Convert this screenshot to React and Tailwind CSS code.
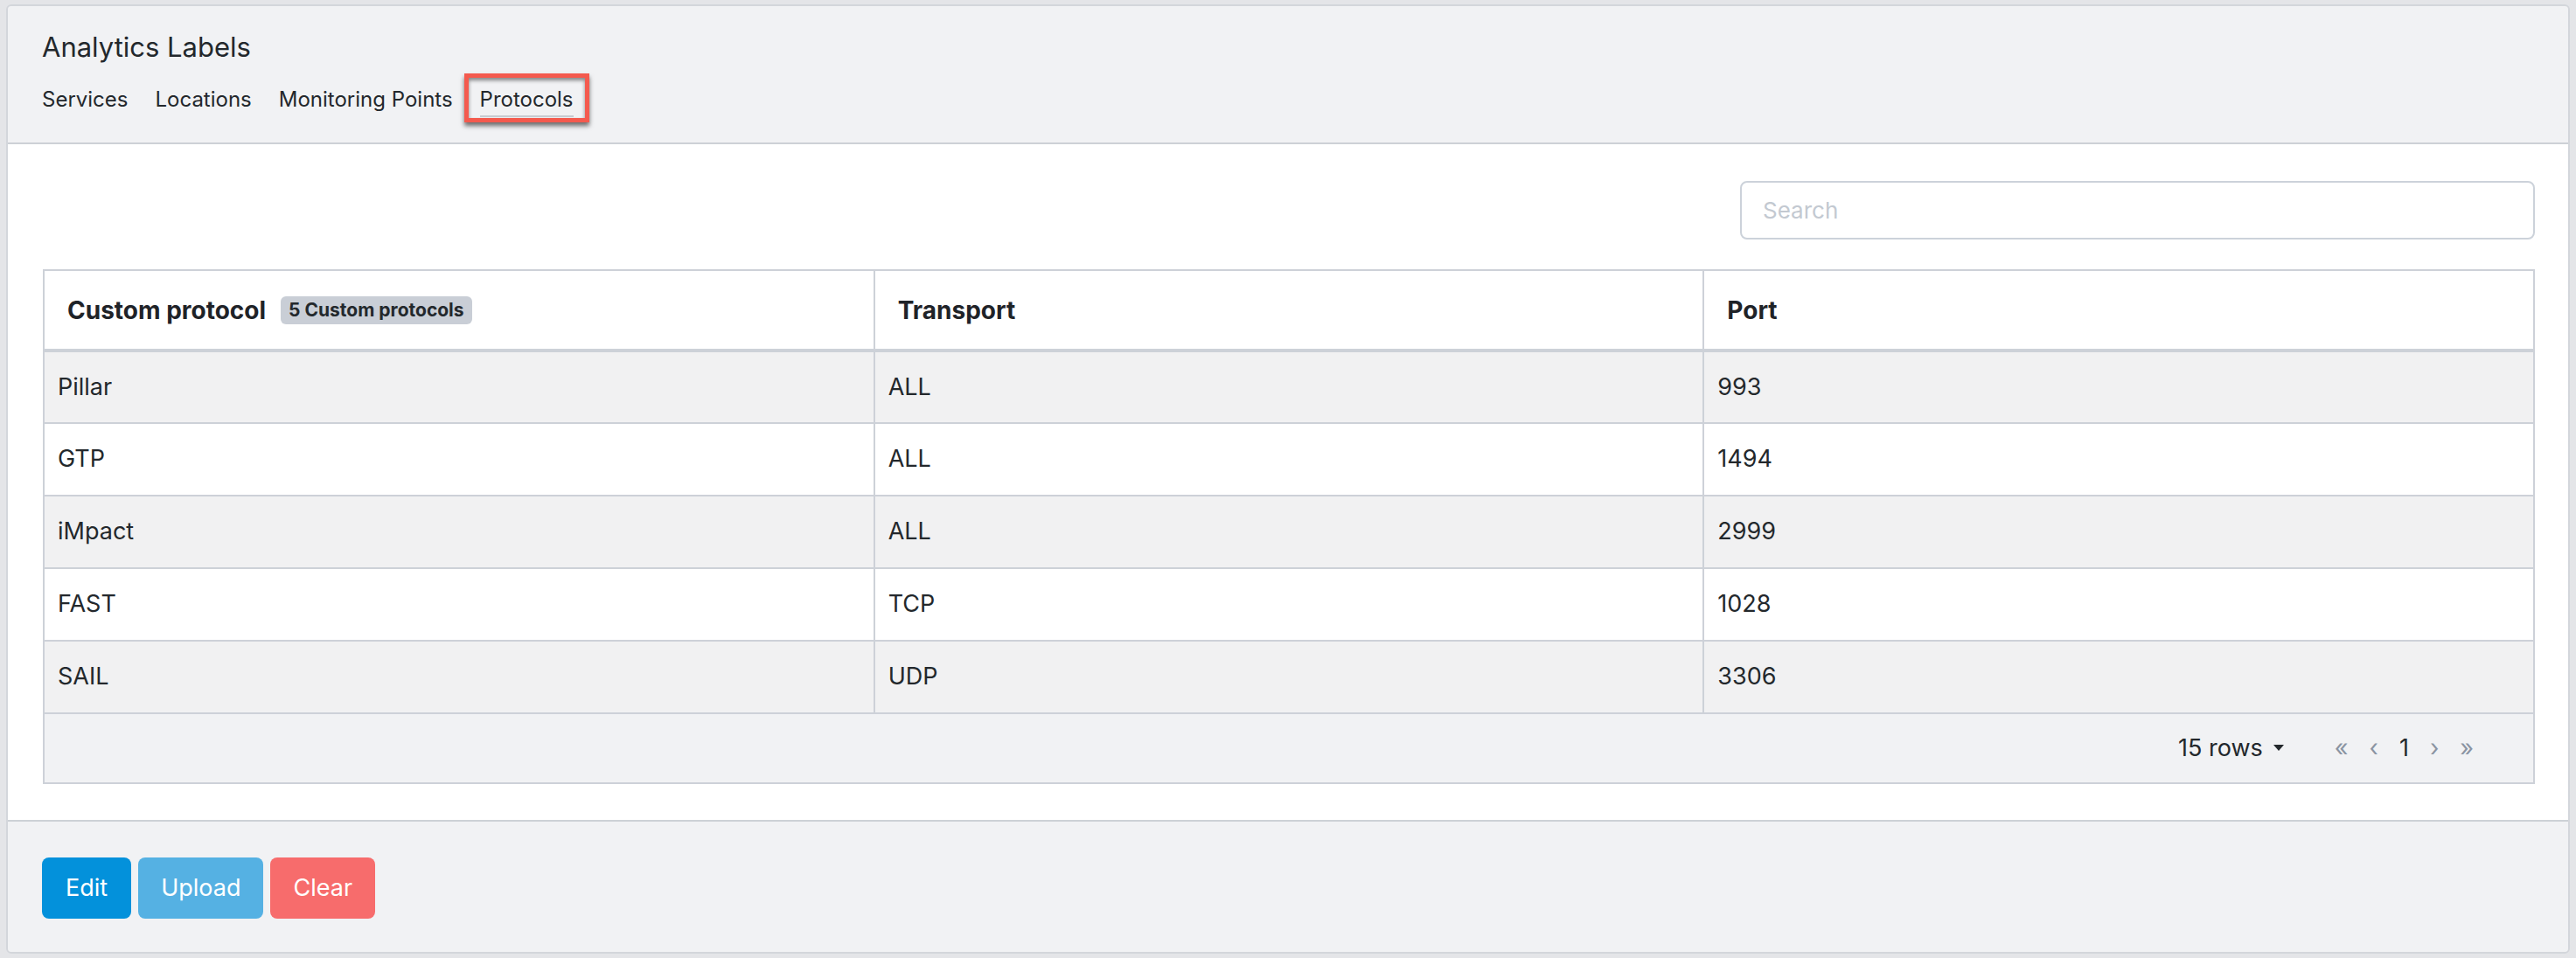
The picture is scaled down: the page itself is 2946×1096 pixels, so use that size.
const rows = [
  { name: "Pillar", transport: "ALL", port: "993" },
  { name: "GTP", transport: "ALL", port: "1494" },
  { name: "iMpact", transport: "ALL", port: "2999" },
  { name: "FAST", transport: "TCP", port: "1028" },
  { name: "SAIL", transport: "UDP", port: "3306" },
];

const tabs = ["Services", "Locations", "Monitoring Points", "Protocols"];

function Tab({ label, active }) {
  return (
    <div className="relative">
      <div
        className={
          "text-[24px] leading-[30px] text-[#23282c] pb-[3px] border-b-2 " +
          (active ? "border-[#c8ccd2]" : "border-transparent")
        }
      >
        {label}
      </div>
      {active && (
        <div className="absolute -left-[18px] -top-[15px] -right-[18px] h-[56px] border-[5px] border-[#f45a4e] shadow-[0_4px_5px_rgba(0,0,0,0.55),inset_0_3px_4px_rgba(0,0,0,0.45)]" />
      )}
    </div>
  );
}

export default function App() {
  return (
    <div
      className="min-h-screen bg-[#e4e5e8] pt-[5px] px-[7px] pb-[6px]"
      style={{ fontFamily: "Inter, 'Noto Sans', sans-serif" }}
    >
      <div className="border-2 border-[#d3d6db] rounded-[6px] overflow-hidden">
        {/* header */}
        <div className="bg-[#f1f2f4] border-b-2 border-[#cdd1d6] pl-[39px] pt-[29px] pb-[29px]">
          <h1 className="text-[31px] leading-[36px] text-[#23282c]">Analytics Labels</h1>
          <div className="flex gap-[31px] mt-[27px]">
            {tabs.map((t) => (
              <Tab key={t} label={t} active={t === "Protocols"} />
            ))}
          </div>
        </div>

        {/* body */}
        <div className="bg-white pl-[40px] pr-[38px] pt-[42px] pb-[41px]">
          <div className="flex justify-end">
            <input
              className="w-[909px] h-[67px] rounded-[8px] border-2 border-[#ccd2da] pl-[24px] text-[26px] text-[#23282c] placeholder:text-[#c3c9d1] outline-none"
              placeholder="Search"
            />
          </div>

          <div className="mt-[34px] border-2 border-[#cdd1d8]">
            <table className="w-full table-fixed border-collapse">
              <thead>
                <tr className="h-[91px] border-b-4 border-[#cdd1d8] bg-white">
                  <th className="text-left pl-[26px] text-[28px] font-bold text-[#1f2328]">
                    <div className="flex items-center gap-[17px]">
                      <span>Custom protocol</span>
                      <span className="bg-[#c9ced6] rounded-[6px] px-[9px] h-[32px] flex items-center text-[21px] font-bold text-[#23282c]">
                        5 Custom protocols
                      </span>
                    </div>
                  </th>
                  <th className="text-left pl-[26px] text-[28px] font-bold text-[#1f2328] border-l-2 border-[#cdd1d8]">
                    Transport
                  </th>
                  <th className="text-left pl-[26px] text-[28px] font-bold text-[#1f2328] border-l-2 border-[#cdd1d8]">
                    Port
                  </th>
                </tr>
              </thead>
              <tbody>
                {rows.map((r, i) => (
                  <tr
                    key={r.name}
                    className={
                      "h-[83px] border-b-2 border-[#cdd1d8] text-[27px] text-[#23282c] " +
                      (i % 2 === 0 ? "bg-[#f1f1f2]" : "bg-white")
                    }
                  >
                    <td className="pl-[15px]">{r.name}</td>
                    <td className="pl-[15px] border-l-2 border-[#cdd1d8]">{r.transport}</td>
                    <td className="pl-[15px] border-l-2 border-[#cdd1d8]">{r.port}</td>
                  </tr>
                ))}
              </tbody>
            </table>
            <div className="h-[78px] bg-[#f1f2f4] flex items-center justify-end pr-[68px] text-[27px] text-[#23282c]">
              <div className="flex items-center gap-[12px]">
                <span>15 rows</span>
                <svg width="12" height="8" viewBox="0 0 12 8">
                  <path d="M0 0 L12 0 L6 7 Z" fill="#23282c" />
                </svg>
              </div>
              <div className="flex items-center gap-[24px] ml-[58px]">
                <span className="text-[#8a94a2]">«</span>
                <span className="text-[#8a94a2]">‹</span>
                <span>1</span>
                <span className="text-[#8a94a2]">›</span>
                <span className="text-[#8a94a2]">»</span>
              </div>
            </div>
          </div>
        </div>

        {/* footer */}
        <div className="bg-[#f1f2f4] border-t-2 border-[#cdd1d6] pl-[39px] pt-[41px] pb-[38px] flex gap-[8px]">
          <button className="h-[70px] px-[27px] rounded-[8px] bg-[#0391db] text-white text-[27px]">Edit</button>
          <button className="h-[70px] px-[26px] rounded-[8px] bg-[#55b1e3] text-white text-[27px]">Upload</button>
          <button className="h-[70px] px-[26px] rounded-[8px] bg-[#f76c6c] text-white text-[27px]">Clear</button>
        </div>
      </div>
    </div>
  );
}
